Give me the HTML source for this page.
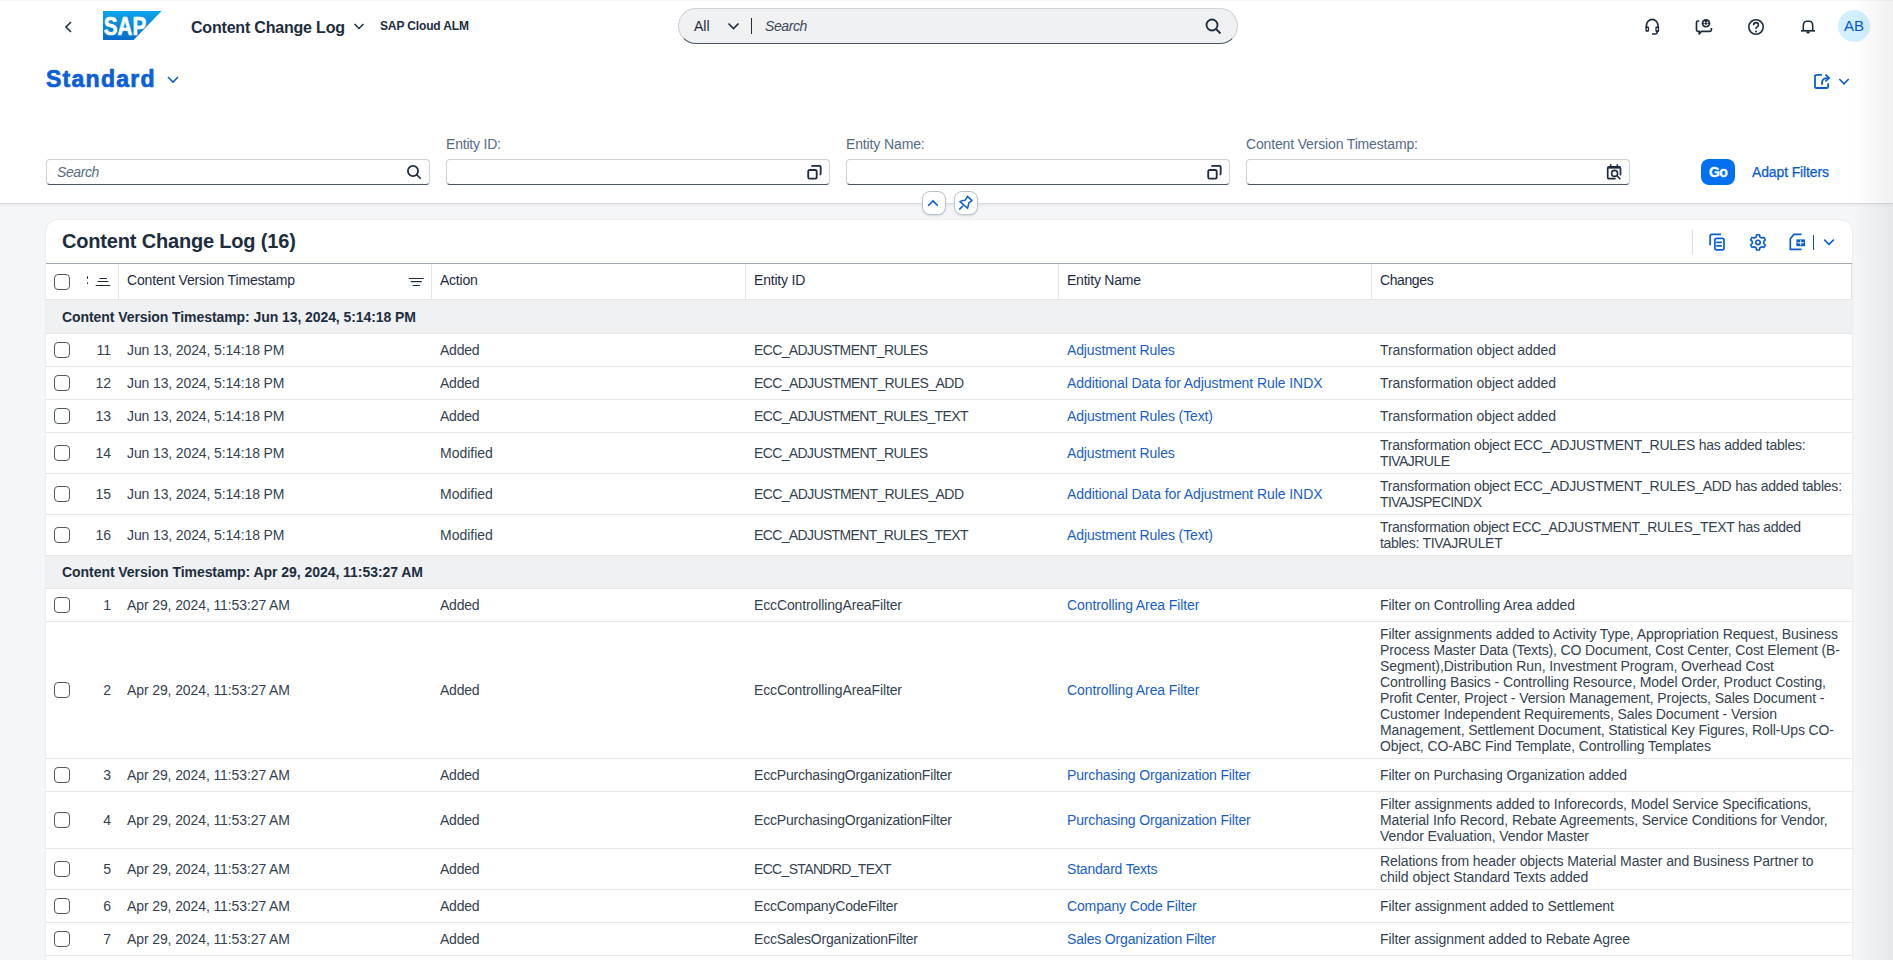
<!DOCTYPE html>
<html><head><meta charset="utf-8">
<style>
*{box-sizing:border-box;margin:0;padding:0}
html,body{width:1893px;height:960px;overflow:hidden;background:#f5f6f7;font-family:"Liberation Sans",sans-serif;color:#1d2d3e;position:relative}
.abs{position:absolute}
#hdr{position:absolute;left:0;top:0;width:1893px;height:204px;background:#fff;border-bottom:1px solid #d9dde1;box-shadow:0 2px 2px rgba(34,53,72,.05)}
.t{position:absolute;white-space:nowrap;line-height:16px}
.ico{position:absolute}
#shade{position:absolute;left:1853px;top:0;width:40px;height:960px;background:linear-gradient(to right,rgba(0,0,0,0),rgba(0,0,0,.06));pointer-events:none}

.grp{position:absolute;left:46px;width:1806px;background:#eff1f2;border-bottom:1px solid #e5e5e5}
.gt{left:62px;font-size:14px;font-weight:bold}
.row{position:absolute;left:46px;width:1806px;background:#fff;border-bottom:1px solid #e5e5e5}
.cb{position:absolute;left:54px;width:16px;height:16px;border:1px solid #505866;border-radius:4px;background:#fff}
.t.num{left:80px;width:31px;text-align:right;font-size:14px}
.num,.c1,.c2,.c3,.c5{color:#34424f}
.c1{left:127px;font-size:14px}
.c2{left:440px;font-size:14px}
.c3{left:754px;font-size:14px}
.c4{left:1067px;font-size:14px}
.c5{left:1380px;font-size:14px}
.lnk{color:#1a5ec4}
.th{position:absolute;top:264px;height:35px;border-left:1px solid #e5e5e5}
.ht{top:272px;font-size:14px}
</style></head>
<body>
<div id="hdr">
  <!-- back arrow -->
  <svg class="ico" style="left:62px;top:19px" width="14" height="16" viewBox="0 0 14 16"><path d="M9 3 L4 8 L9 13" fill="none" stroke="#1d2d3e" stroke-width="1.6"/></svg>
  <!-- SAP logo -->
  <svg class="ico" style="left:103px;top:11px" width="59" height="29" viewBox="0 0 59 29">
    <defs><linearGradient id="sapg" x1="0" y1="0" x2="0" y2="1"><stop offset="0" stop-color="#0aa5ea"/><stop offset="1" stop-color="#0a6bcb"/></linearGradient></defs>
    <polygon points="0,0 58.6,0 30.6,29 0,29" fill="url(#sapg)"/>
    <text x="0.8" y="24.2" font-family="Liberation Sans" font-weight="bold" font-size="25.5" fill="#fff" textLength="42.5" lengthAdjust="spacingAndGlyphs" stroke="#fff" stroke-width="0.6">SAP</text>
  </svg>
  <div class="t" style="left:191px;top:19.5px;font-size:16px;font-weight:bold;letter-spacing:-0.195px">Content Change Log</div>
  <svg class="ico" style="left:353px;top:20px" width="12" height="12" viewBox="0 0 12 12"><path d="M1.5 4 L6 8.5 L10.5 4" fill="none" stroke="#1d2d3e" stroke-width="1.5"/></svg>
  <div class="t" style="left:380px;top:18px;font-size:12px;font-weight:bold;letter-spacing:-0.14px">SAP Cloud ALM</div>
  <!-- shell search -->
  <div class="abs" style="left:678px;top:8px;width:560px;height:36px;border-radius:18px;background:#eff1f2;border:1px solid #cdd1d5;border-bottom-color:#4a5463"></div>
  <div class="t" style="left:694px;top:18px;font-size:14px">All</div>
  <svg class="ico" style="left:727px;top:20px" width="13" height="12" viewBox="0 0 13 12"><path d="M1.5 3.5 L6.5 8.5 L11.5 3.5" fill="none" stroke="#1d2d3e" stroke-width="1.6"/></svg>
  <div class="abs" style="left:751px;top:18px;width:1px;height:16px;background:#1d2d3e"></div>
  <div class="t" style="left:765px;top:18px;font-size:14px;font-style:italic;color:#3d4a58;letter-spacing:-0.41px">Search</div>
  <svg class="ico" style="left:1205px;top:18px" width="17" height="17" viewBox="0 0 17 17"><circle cx="7" cy="7" r="5.5" fill="none" stroke="#1d2d3e" stroke-width="1.8"/><path d="M11 11 L15.5 15.5" stroke="#1d2d3e" stroke-width="1.8"/></svg>

  <!-- shell icons -->
  <svg class="ico" style="left:1643px;top:17px" width="18" height="20" viewBox="0 0 18 20">
    <path d="M3.4 10.4 V8.6 A5.8 6.2 0 0 1 15 8.6 V10.4" fill="none" stroke="#1d2d3e" stroke-width="1.7"/>
    <rect x="2.4" y="9.4" width="3.7" height="5.4" rx="1" fill="#1d2d3e"/>
    <rect x="12.4" y="9.4" width="3.7" height="5.6" rx="1" fill="#1d2d3e"/>
    <circle cx="4.3" cy="12.1" r="0.85" fill="#fff"/><circle cx="14.2" cy="12.2" r="0.85" fill="#fff"/>
    <path d="M14.2 15 Q14.2 17 12 17 H9" fill="none" stroke="#1d2d3e" stroke-width="1.6"/>
  </svg>
  <svg class="ico" style="left:1695px;top:17px" width="18" height="20" viewBox="0 0 18 20">
    <path d="M4.2 4 H3 Q1.5 4 1.5 5.5 V12.8 Q1.5 14.3 3 14.3 H4.4 L4.2 17 L6.6 14.3 H14.8 Q16.4 14.3 16.4 12.7 V11" fill="none" stroke="#1d2d3e" stroke-width="1.7" stroke-linejoin="round"/>
    <circle cx="11" cy="6.2" r="4.3" fill="#1d2d3e"/>
    <circle cx="9.5" cy="5.4" r="0.9" fill="#fff"/><circle cx="12.5" cy="5.4" r="0.9" fill="#fff"/>
    <path d="M8.8 7.2 Q11 9.6 13.2 7.2" fill="none" stroke="#fff" stroke-width="1.1"/>
  </svg>
  <svg class="ico" style="left:1747px;top:18px" width="18" height="18" viewBox="0 0 18 18">
    <circle cx="9" cy="9" r="7.2" fill="none" stroke="#1d2d3e" stroke-width="1.6"/>
    <path d="M6.6 7.2 Q6.6 4.6 9 4.6 Q11.4 4.6 11.4 6.9 Q11.4 8.4 9.9 9 Q9 9.4 9 10.6 V11" fill="none" stroke="#1d2d3e" stroke-width="1.6"/>
    <circle cx="9" cy="13.4" r="1" fill="#1d2d3e"/>
  </svg>
  <svg class="ico" style="left:1800px;top:19px" width="16" height="16" viewBox="0 0 16 16">
    <path d="M3.3 11.6 V7 Q3.3 2.2 6.6 2.2 H9.4 Q12.7 2.2 12.7 7 V11.6" fill="none" stroke="#1d2d3e" stroke-width="1.6"/>
    <path d="M1 11.8 H15" stroke="#1d2d3e" stroke-width="1.7"/>
    <path d="M6.1 12.6 A1.95 2.1 0 0 0 10 12.6 Z" fill="#1d2d3e"/>
  </svg>
  <!-- export + chevron -->
  <svg class="ico" style="left:1813px;top:73px" width="18" height="17" viewBox="0 0 18 17">
    <path d="M8.9 1.8 H3.6 Q2 1.8 2 3.4 V13.4 Q2 15 3.6 15 H13.6 Q15.1 15 15.1 13.4 V10.2" fill="none" stroke="#0a5dcc" stroke-width="1.8"/>
    <path d="M9 11.7 V9.4 Q9 5.1 14.8 5.1" fill="none" stroke="#0a5dcc" stroke-width="1.8"/>
    <path d="M12.4 1.6 L16.2 5.1 L12.4 8.4" fill="none" stroke="#0a5dcc" stroke-width="1.7"/>
  </svg>
  <svg class="ico" style="left:1838px;top:77px" width="12" height="9" viewBox="0 0 12 9"><path d="M1.3 2 L6 6.8 L10.7 2" fill="none" stroke="#0a5dcc" stroke-width="1.6"/></svg>
  <!-- avatar -->
  <div class="abs" style="left:1838px;top:10px;width:32px;height:32px;border-radius:50%;background:#d1efff;color:#0057d2;font-size:15px;line-height:32px;text-align:center">AB</div>
  <!-- Standard -->
  <div class="t" style="left:46px;top:64.5px;font-size:23px;line-height:28px;font-weight:bold;color:#0a60d8;letter-spacing:1.27px;-webkit-text-stroke:0.7px #0a60d8">Standard</div>
  <svg class="ico" style="left:166px;top:74px" width="14" height="12" viewBox="0 0 14 12"><path d="M2 3 L7 8 L12 3" fill="none" stroke="#0a5dcc" stroke-width="1.6"/></svg>
  <!-- filter bar -->
  <div class="abs" style="left:46px;top:159px;width:384px;height:26px;border-radius:4px;border:1px solid #cfd3d7;border-bottom-color:#4a5463;background:#fff"></div>
  <div class="t" style="left:57px;top:164px;font-size:14px;font-style:italic;color:#556b82;letter-spacing:-0.41px">Search</div>
  <div class="t" style="left:446px;top:136px;font-size:14px;color:#556b82;letter-spacing:-0.2px">Entity ID:</div>
  <div class="abs" style="left:446px;top:159px;width:384px;height:26px;border-radius:4px;border:1px solid #cfd3d7;border-bottom-color:#4a5463;background:#fff"></div>
  <div class="t" style="left:846px;top:136px;font-size:14px;color:#556b82;letter-spacing:-0.13px">Entity Name:</div>
  <div class="abs" style="left:846px;top:159px;width:384px;height:26px;border-radius:4px;border:1px solid #cfd3d7;border-bottom-color:#4a5463;background:#fff"></div>
  <div class="t" style="left:1246px;top:136px;font-size:14px;color:#556b82;letter-spacing:-0.155px">Content Version Timestamp:</div>
  <div class="abs" style="left:1246px;top:159px;width:384px;height:26px;border-radius:4px;border:1px solid #cfd3d7;border-bottom-color:#4a5463;background:#fff"></div>
  <div class="abs" style="left:1701px;top:159px;width:34px;height:26px;border-radius:8px;background:#0070f2;color:#fff;font-size:14px;font-weight:bold;line-height:26px;text-align:center;letter-spacing:-0.6px;-webkit-text-stroke:0.3px #fff">Go</div>
  <div class="t" style="left:1752px;top:164px;font-size:14px;color:#0a5ccb;letter-spacing:-0.14px;-webkit-text-stroke:0.25px #0a5ccb">Adapt Filters</div>
  <!-- filter icons -->
  <svg class="ico" style="left:405px;top:163px" width="18" height="18" viewBox="0 0 18 18"><circle cx="8" cy="8" r="5.1" fill="none" stroke="#1d2d3e" stroke-width="1.8"/><path d="M11.6 11.6 L15.8 15.8" stroke="#1d2d3e" stroke-width="1.6"/></svg>
  <svg class="ico" style="left:805px;top:163px" width="18" height="18" viewBox="0 0 18 18"><rect x="3.2" y="7" width="8.5" height="8.6" rx="1.6" fill="none" stroke="#1d2d3e" stroke-width="1.8"/><path d="M6.6 3.6 Q7 2.9 8 2.9 H14.4 Q15.7 2.9 15.7 4.2 V10.4 Q15.7 11.4 14.6 11.7" fill="none" stroke="#1d2d3e" stroke-width="1.8"/></svg>
  <svg class="ico" style="left:1205px;top:163px" width="18" height="18" viewBox="0 0 18 18"><rect x="3.2" y="7" width="8.5" height="8.6" rx="1.6" fill="none" stroke="#1d2d3e" stroke-width="1.8"/><path d="M6.6 3.6 Q7 2.9 8 2.9 H14.4 Q15.7 2.9 15.7 4.2 V10.4 Q15.7 11.4 14.6 11.7" fill="none" stroke="#1d2d3e" stroke-width="1.8"/></svg>
  <svg class="ico" style="left:1605px;top:163px" width="18" height="18" viewBox="0 0 18 18">
    <path d="M10.6 15.7 H4.2 Q2.7 15.7 2.7 14.2 V5.3 Q2.7 3.9 4.2 3.9 H14 Q15.5 3.9 15.5 5.3 V12.4" fill="none" stroke="#1d2d3e" stroke-width="1.7"/>
    <path d="M2.7 4.6 H15.5" stroke="#1d2d3e" stroke-width="2"/>
    <path d="M5.7 1.2 V5.2 M12.3 1.2 V5.2" stroke="#1d2d3e" stroke-width="1.6"/>
    <circle cx="9.6" cy="10.4" r="3" fill="none" stroke="#1d2d3e" stroke-width="1.6"/>
    <path d="M11.8 12.6 L15.4 16.3" stroke="#1d2d3e" stroke-width="1.5"/>
  </svg>
  <!-- collapse / pin -->
  <div class="abs" style="left:922px;top:191px;width:24px;height:24px;border-radius:8px;background:#fff;border:1px solid #bcc3ca;box-shadow:0 1px 2px rgba(34,53,72,.15)"></div>
  <svg class="ico" style="left:926px;top:197px" width="14" height="11" viewBox="0 0 14 11"><path d="M2.2 8.8 L7 4 L11.8 8.8" fill="none" stroke="#0a5dcc" stroke-width="1.6"/></svg>
  <div class="abs" style="left:954px;top:191px;width:24px;height:24px;border-radius:8px;background:#fff;border:1px solid #bcc3ca;box-shadow:0 1px 2px rgba(34,53,72,.15)"></div>
  <svg class="ico" style="left:956px;top:194px" width="18" height="18" viewBox="0 0 18 18">
    <path d="M3.2 15.6 L7 11.8" stroke="#0a5dcc" stroke-width="1.6"/>
    <path d="M4 7.6 Q6 6.2 9.2 6.2 L11.5 2.4 L16 6.6 L12.8 8.8 Q12.2 12 11.5 14.2 Z" fill="none" stroke="#0a5dcc" stroke-width="1.5" stroke-linejoin="round"/>
  </svg>
</div>

<!-- table card -->
<div class="abs" style="left:46px;top:220px;width:1806px;height:760px;background:#fff;border-radius:12px 12px 0 0;box-shadow:0 0 2px rgba(34,53,72,.14)"></div>
<div class="t" style="left:62px;top:230px;font-size:20px;line-height:22px;font-weight:bold;letter-spacing:-0.18px">Content Change Log (16)</div>


<!-- table header -->
<div class="abs" style="left:46px;top:263px;width:1806px;height:37px;background:#fff;border-top:1px solid #a3a9b0;border-bottom:1px solid #e5e5e5"></div>
<div class="th" style="left:118px;width:1px"></div>
<div class="th" style="left:431px;width:1px"></div>
<div class="th" style="left:745px;width:1px"></div>
<div class="th" style="left:1058px;width:1px"></div>
<div class="th" style="left:1371px;width:1px"></div>
<div class="th" style="left:1851px;width:1px"></div>
<div class="cb" style="top:274px"></div>
<div class="t ht" style="left:127px;letter-spacing:-0.166px">Content Version Timestamp</div>
<div class="t ht" style="left:440px;letter-spacing:-0.24px">Action</div>
<div class="t ht" style="left:754px;letter-spacing:-0.2px">Entity ID</div>
<div class="t ht" style="left:1067px;letter-spacing:-0.22px">Entity Name</div>
<div class="t ht" style="left:1380px;letter-spacing:-0.4px">Changes</div>

<!-- table toolbar icons -->
<div class="abs" style="left:1692px;top:230px;width:1px;height:24px;background:#d9dde1"></div>
<svg class="ico" style="left:1708px;top:233px" width="18" height="18" viewBox="0 0 18 18">
  <path d="M2.1 12.3 V3.3 Q2.1 1.4 4 1.4 H13" fill="none" stroke="#0a5dcc" stroke-width="1.7"/>
  <rect x="6.9" y="5.3" width="9.1" height="11.5" rx="1.8" fill="none" stroke="#0a5dcc" stroke-width="1.7"/>
  <path d="M8.3 9.3 H13.8 M8.3 12.8 H13.8" stroke="#0a5dcc" stroke-width="1.7"/>
</svg>
<svg class="ico" style="left:1749px;top:233px" width="18" height="18" viewBox="0 0 18 18">
  <path d="M7.6 1.8 H10.4 L10.9 4 L12.8 5.1 L15 4.4 L16.4 6.8 L14.7 8.3 V10.5 L16.4 12 L15 14.4 L12.8 13.7 L10.9 14.8 L10.4 17 H7.6 L7.1 14.8 L5.2 13.7 L3 14.4 L1.6 12 L3.3 10.5 V8.3 L1.6 6.8 L3 4.4 L5.2 5.1 L7.1 4 Z" fill="none" stroke="#0a5dcc" stroke-width="1.6" stroke-linejoin="round"/>
  <circle cx="9" cy="9.4" r="2.2" fill="none" stroke="#0a5dcc" stroke-width="1.6"/>
</svg>
<svg class="ico" style="left:1788px;top:233px" width="18" height="18" viewBox="0 0 18 18">
  <path d="M13.5 1.4 H6 L2.3 5.8 V16.4 H13.5" fill="none" stroke="#0a5dcc" stroke-width="1.7" stroke-linejoin="round"/>
  <rect x="8.4" y="6.4" width="8.6" height="6.8" fill="#0a5dcc"/>
  <path d="M9.4 9.8 H16 M12.7 7.3 V12.3" stroke="#fff" stroke-width="1"/>
</svg>
<div class="abs" style="left:1813px;top:235px;width:1.3px;height:15px;background:#1d4f91"></div>
<svg class="ico" style="left:1823px;top:237px" width="12" height="10" viewBox="0 0 12 10"><path d="M1.2 2.6 L6 7.4 L10.8 2.6" fill="none" stroke="#0a5dcc" stroke-width="1.5"/></svg>
<!-- header column icons -->
<div class="abs" style="left:86.9px;top:275.8px;width:1.3px;height:3.5px;background:#1d2d3e;border-radius:1px"></div>
<div class="abs" style="left:86.9px;top:282.2px;width:1.3px;height:1.8px;background:#1d2d3e;border-radius:1px"></div>
<svg class="ico" style="left:94px;top:276px" width="18" height="12" viewBox="0 0 18 12"><path d="M5.9 2.5 H12.5 M4 5.5 H14 M2.1 9.5 H15.9" stroke="#1d2d3e" stroke-width="1.1" stroke-linecap="round"/></svg>
<svg class="ico" style="left:407px;top:276px" width="18" height="12" viewBox="0 0 18 12"><path d="M2.2 2.5 H16.2 M4.2 5.6 H14.4 M6 9.5 H12.7" stroke="#1d2d3e" stroke-width="1.1" stroke-linecap="round"/></svg>
<!--TABLE-->
<div class="grp" style="top:300px;height:34px"></div>
<div class="t gt" style="top:309px"><span style="letter-spacing:-0.073px;">Content Version Timestamp: Jun 13, 2024, 5:14:18 PM</span></div>
<div class="row" style="top:334px;height:33px"></div>
<div class="cb" style="top:342px"></div>
<div class="t num" style="top:342px">11</div>
<div class="t c1" style="top:342px"><span style="letter-spacing:-0.124px;">Jun 13, 2024, 5:14:18 PM</span></div>
<div class="t c2" style="top:342px"><span style="letter-spacing:-0.221px;">Added</span></div>
<div class="t c3" style="top:342px"><span style="letter-spacing:-0.618px;">ECC_ADJUSTMENT_RULES</span></div>
<div class="t c4 lnk" style="top:342px"><span style="letter-spacing:-0.128px;">Adjustment Rules</span></div>
<div class="t c5" style="top:342px"><span style="letter-spacing:-0.066px;">Transformation object added</span></div>
<div class="row" style="top:367px;height:33px"></div>
<div class="cb" style="top:375px"></div>
<div class="t num" style="top:375px">12</div>
<div class="t c1" style="top:375px"><span style="letter-spacing:-0.124px;">Jun 13, 2024, 5:14:18 PM</span></div>
<div class="t c2" style="top:375px"><span style="letter-spacing:-0.221px;">Added</span></div>
<div class="t c3" style="top:375px"><span style="letter-spacing:-0.577px;">ECC_ADJUSTMENT_RULES_ADD</span></div>
<div class="t c4 lnk" style="top:375px"><span style="letter-spacing:-0.073px;">Additional Data for Adjustment Rule INDX</span></div>
<div class="t c5" style="top:375px"><span style="letter-spacing:-0.066px;">Transformation object added</span></div>
<div class="row" style="top:400px;height:33px"></div>
<div class="cb" style="top:408px"></div>
<div class="t num" style="top:408px">13</div>
<div class="t c1" style="top:408px"><span style="letter-spacing:-0.124px;">Jun 13, 2024, 5:14:18 PM</span></div>
<div class="t c2" style="top:408px"><span style="letter-spacing:-0.221px;">Added</span></div>
<div class="t c3" style="top:408px"><span style="letter-spacing:-0.625px;">ECC_ADJUSTMENT_RULES_TEXT</span></div>
<div class="t c4 lnk" style="top:408px"><span style="letter-spacing:-0.119px;">Adjustment Rules (Text)</span></div>
<div class="t c5" style="top:408px"><span style="letter-spacing:-0.066px;">Transformation object added</span></div>
<div class="row" style="top:433px;height:41px"></div>
<div class="cb" style="top:445px"></div>
<div class="t num" style="top:445px">14</div>
<div class="t c1" style="top:445px"><span style="letter-spacing:-0.124px;">Jun 13, 2024, 5:14:18 PM</span></div>
<div class="t c2" style="top:445px"><span style="letter-spacing:-0.003px;">Modified</span></div>
<div class="t c3" style="top:445px"><span style="letter-spacing:-0.618px;">ECC_ADJUSTMENT_RULES</span></div>
<div class="t c4 lnk" style="top:445px"><span style="letter-spacing:-0.128px;">Adjustment Rules</span></div>
<div class="t c5" style="top:437px"><span style="letter-spacing:-0.229px;">Transformation object ECC_ADJUSTMENT_RULES has added tables:</span><br><span style="letter-spacing:-0.555px;">TIVAJRULE</span></div>
<div class="row" style="top:474px;height:41px"></div>
<div class="cb" style="top:486px"></div>
<div class="t num" style="top:486px">15</div>
<div class="t c1" style="top:486px"><span style="letter-spacing:-0.124px;">Jun 13, 2024, 5:14:18 PM</span></div>
<div class="t c2" style="top:486px"><span style="letter-spacing:-0.003px;">Modified</span></div>
<div class="t c3" style="top:486px"><span style="letter-spacing:-0.577px;">ECC_ADJUSTMENT_RULES_ADD</span></div>
<div class="t c4 lnk" style="top:486px"><span style="letter-spacing:-0.073px;">Additional Data for Adjustment Rule INDX</span></div>
<div class="t c5" style="top:478px"><span style="letter-spacing:-0.229px;">Transformation object ECC_ADJUSTMENT_RULES_ADD has added tables:</span><br><span style="letter-spacing:-0.555px;">TIVAJSPECINDX</span></div>
<div class="row" style="top:515px;height:41px"></div>
<div class="cb" style="top:527px"></div>
<div class="t num" style="top:527px">16</div>
<div class="t c1" style="top:527px"><span style="letter-spacing:-0.124px;">Jun 13, 2024, 5:14:18 PM</span></div>
<div class="t c2" style="top:527px"><span style="letter-spacing:-0.003px;">Modified</span></div>
<div class="t c3" style="top:527px"><span style="letter-spacing:-0.625px;">ECC_ADJUSTMENT_RULES_TEXT</span></div>
<div class="t c4 lnk" style="top:527px"><span style="letter-spacing:-0.119px;">Adjustment Rules (Text)</span></div>
<div class="t c5" style="top:519px"><span style="letter-spacing:-0.291px;">Transformation object ECC_ADJUSTMENT_RULES_TEXT has added</span><br><span style="letter-spacing:-0.303px;">tables: TIVAJRULET</span></div>
<div class="grp" style="top:556px;height:33px"></div>
<div class="t gt" style="top:564px"><span style="letter-spacing:-0.051px;">Content Version Timestamp: Apr 29, 2024, 11:53:27 AM</span></div>
<div class="row" style="top:589px;height:33px"></div>
<div class="cb" style="top:597px"></div>
<div class="t num" style="top:597px">1</div>
<div class="t c1" style="top:597px"><span style="letter-spacing:-0.105px;">Apr 29, 2024, 11:53:27 AM</span></div>
<div class="t c2" style="top:597px"><span style="letter-spacing:-0.221px;">Added</span></div>
<div class="t c3" style="top:597px"><span style="letter-spacing:-0.128px;">EccControllingAreaFilter</span></div>
<div class="t c4 lnk" style="top:597px"><span style="letter-spacing:-0.101px;">Controlling Area Filter</span></div>
<div class="t c5" style="top:597px"><span style="letter-spacing:-0.061px;">Filter on Controlling Area added</span></div>
<div class="row" style="top:622px;height:137px"></div>
<div class="cb" style="top:682px"></div>
<div class="t num" style="top:682px">2</div>
<div class="t c1" style="top:682px"><span style="letter-spacing:-0.105px;">Apr 29, 2024, 11:53:27 AM</span></div>
<div class="t c2" style="top:682px"><span style="letter-spacing:-0.221px;">Added</span></div>
<div class="t c3" style="top:682px"><span style="letter-spacing:-0.128px;">EccControllingAreaFilter</span></div>
<div class="t c4 lnk" style="top:682px"><span style="letter-spacing:-0.101px;">Controlling Area Filter</span></div>
<div class="t c5" style="top:626px"><span style="letter-spacing:-0.087px;">Filter assignments added to Activity Type, Appropriation Request, Business</span><br><span style="letter-spacing:-0.131px;">Process Master Data (Texts), CO Document, Cost Center, Cost Element (B-</span><br><span style="letter-spacing:-0.101px;">Segment),Distribution Run, Investment Program, Overhead Cost</span><br><span style="letter-spacing:-0.075px;">Controlling Basics - Controlling Resource, Model Order, Product Costing,</span><br><span style="letter-spacing:-0.097px;">Profit Center, Project - Version Management, Projects, Sales Document -</span><br><span style="letter-spacing:-0.105px;">Customer Independent Requirements, Sales Document - Version</span><br><span style="letter-spacing:-0.107px;">Management, Settlement Document, Statistical Key Figures, Roll-Ups CO-</span><br><span style="letter-spacing:-0.108px;">Object, CO-ABC Find Template, Controlling Templates</span></div>
<div class="row" style="top:759px;height:33px"></div>
<div class="cb" style="top:767px"></div>
<div class="t num" style="top:767px">3</div>
<div class="t c1" style="top:767px"><span style="letter-spacing:-0.105px;">Apr 29, 2024, 11:53:27 AM</span></div>
<div class="t c2" style="top:767px"><span style="letter-spacing:-0.221px;">Added</span></div>
<div class="t c3" style="top:767px"><span style="letter-spacing:-0.196px;">EccPurchasingOrganizationFilter</span></div>
<div class="t c4 lnk" style="top:767px"><span style="letter-spacing:-0.159px;">Purchasing Organization Filter</span></div>
<div class="t c5" style="top:767px"><span style="letter-spacing:-0.095px;">Filter on Purchasing Organization added</span></div>
<div class="row" style="top:792px;height:57px"></div>
<div class="cb" style="top:812px"></div>
<div class="t num" style="top:812px">4</div>
<div class="t c1" style="top:812px"><span style="letter-spacing:-0.105px;">Apr 29, 2024, 11:53:27 AM</span></div>
<div class="t c2" style="top:812px"><span style="letter-spacing:-0.221px;">Added</span></div>
<div class="t c3" style="top:812px"><span style="letter-spacing:-0.196px;">EccPurchasingOrganizationFilter</span></div>
<div class="t c4 lnk" style="top:812px"><span style="letter-spacing:-0.159px;">Purchasing Organization Filter</span></div>
<div class="t c5" style="top:796px"><span style="letter-spacing:-0.073px;">Filter assignments added to Inforecords, Model Service Specifications,</span><br><span style="letter-spacing:-0.087px;">Material Info Record, Rebate Agreements, Service Conditions for Vendor,</span><br><span style="letter-spacing:-0.112px;">Vendor Evaluation, Vendor Master</span></div>
<div class="row" style="top:849px;height:41px"></div>
<div class="cb" style="top:861px"></div>
<div class="t num" style="top:861px">5</div>
<div class="t c1" style="top:861px"><span style="letter-spacing:-0.105px;">Apr 29, 2024, 11:53:27 AM</span></div>
<div class="t c2" style="top:861px"><span style="letter-spacing:-0.221px;">Added</span></div>
<div class="t c3" style="top:861px"><span style="letter-spacing:-0.663px;">ECC_STANDRD_TEXT</span></div>
<div class="t c4 lnk" style="top:861px"><span style="letter-spacing:-0.203px;">Standard Texts</span></div>
<div class="t c5" style="top:853px"><span style="letter-spacing:-0.089px;">Relations from header objects Material Master and Business Partner to</span><br><span style="letter-spacing:-0.047px;">child object Standard Texts added</span></div>
<div class="row" style="top:890px;height:33px"></div>
<div class="cb" style="top:898px"></div>
<div class="t num" style="top:898px">6</div>
<div class="t c1" style="top:898px"><span style="letter-spacing:-0.105px;">Apr 29, 2024, 11:53:27 AM</span></div>
<div class="t c2" style="top:898px"><span style="letter-spacing:-0.221px;">Added</span></div>
<div class="t c3" style="top:898px"><span style="letter-spacing:-0.202px;">EccCompanyCodeFilter</span></div>
<div class="t c4 lnk" style="top:898px"><span style="letter-spacing:-0.143px;">Company Code Filter</span></div>
<div class="t c5" style="top:898px"><span style="letter-spacing:-0.050px;">Filter assignment added to Settlement</span></div>
<div class="row" style="top:923px;height:33px"></div>
<div class="cb" style="top:931px"></div>
<div class="t num" style="top:931px">7</div>
<div class="t c1" style="top:931px"><span style="letter-spacing:-0.105px;">Apr 29, 2024, 11:53:27 AM</span></div>
<div class="t c2" style="top:931px"><span style="letter-spacing:-0.221px;">Added</span></div>
<div class="t c3" style="top:931px"><span style="letter-spacing:-0.194px;">EccSalesOrganizationFilter</span></div>
<div class="t c4 lnk" style="top:931px"><span style="letter-spacing:-0.179px;">Sales Organization Filter</span></div>
<div class="t c5" style="top:931px"><span style="letter-spacing:-0.118px;">Filter assignment added to Rebate Agree</span></div>
<div class="row" style="top:956px;height:33px"></div>
<div class="cb" style="top:964px"></div>
<div class="t num" style="top:964px">8</div>
<div class="t c1" style="top:964px"><span style="letter-spacing:-0.105px;">Apr 29, 2024, 11:53:27 AM</span></div>
<div class="t c2" style="top:964px"><span style="letter-spacing:-0.221px;">Added</span></div>
<div class="t c5" style="top:964px"></div>
<!--/TABLE-->
<div class="abs" style="left:0;top:0;width:1893px;height:1px;background:#f6f6f7"></div>
<div id="shade"></div>
</body></html>
